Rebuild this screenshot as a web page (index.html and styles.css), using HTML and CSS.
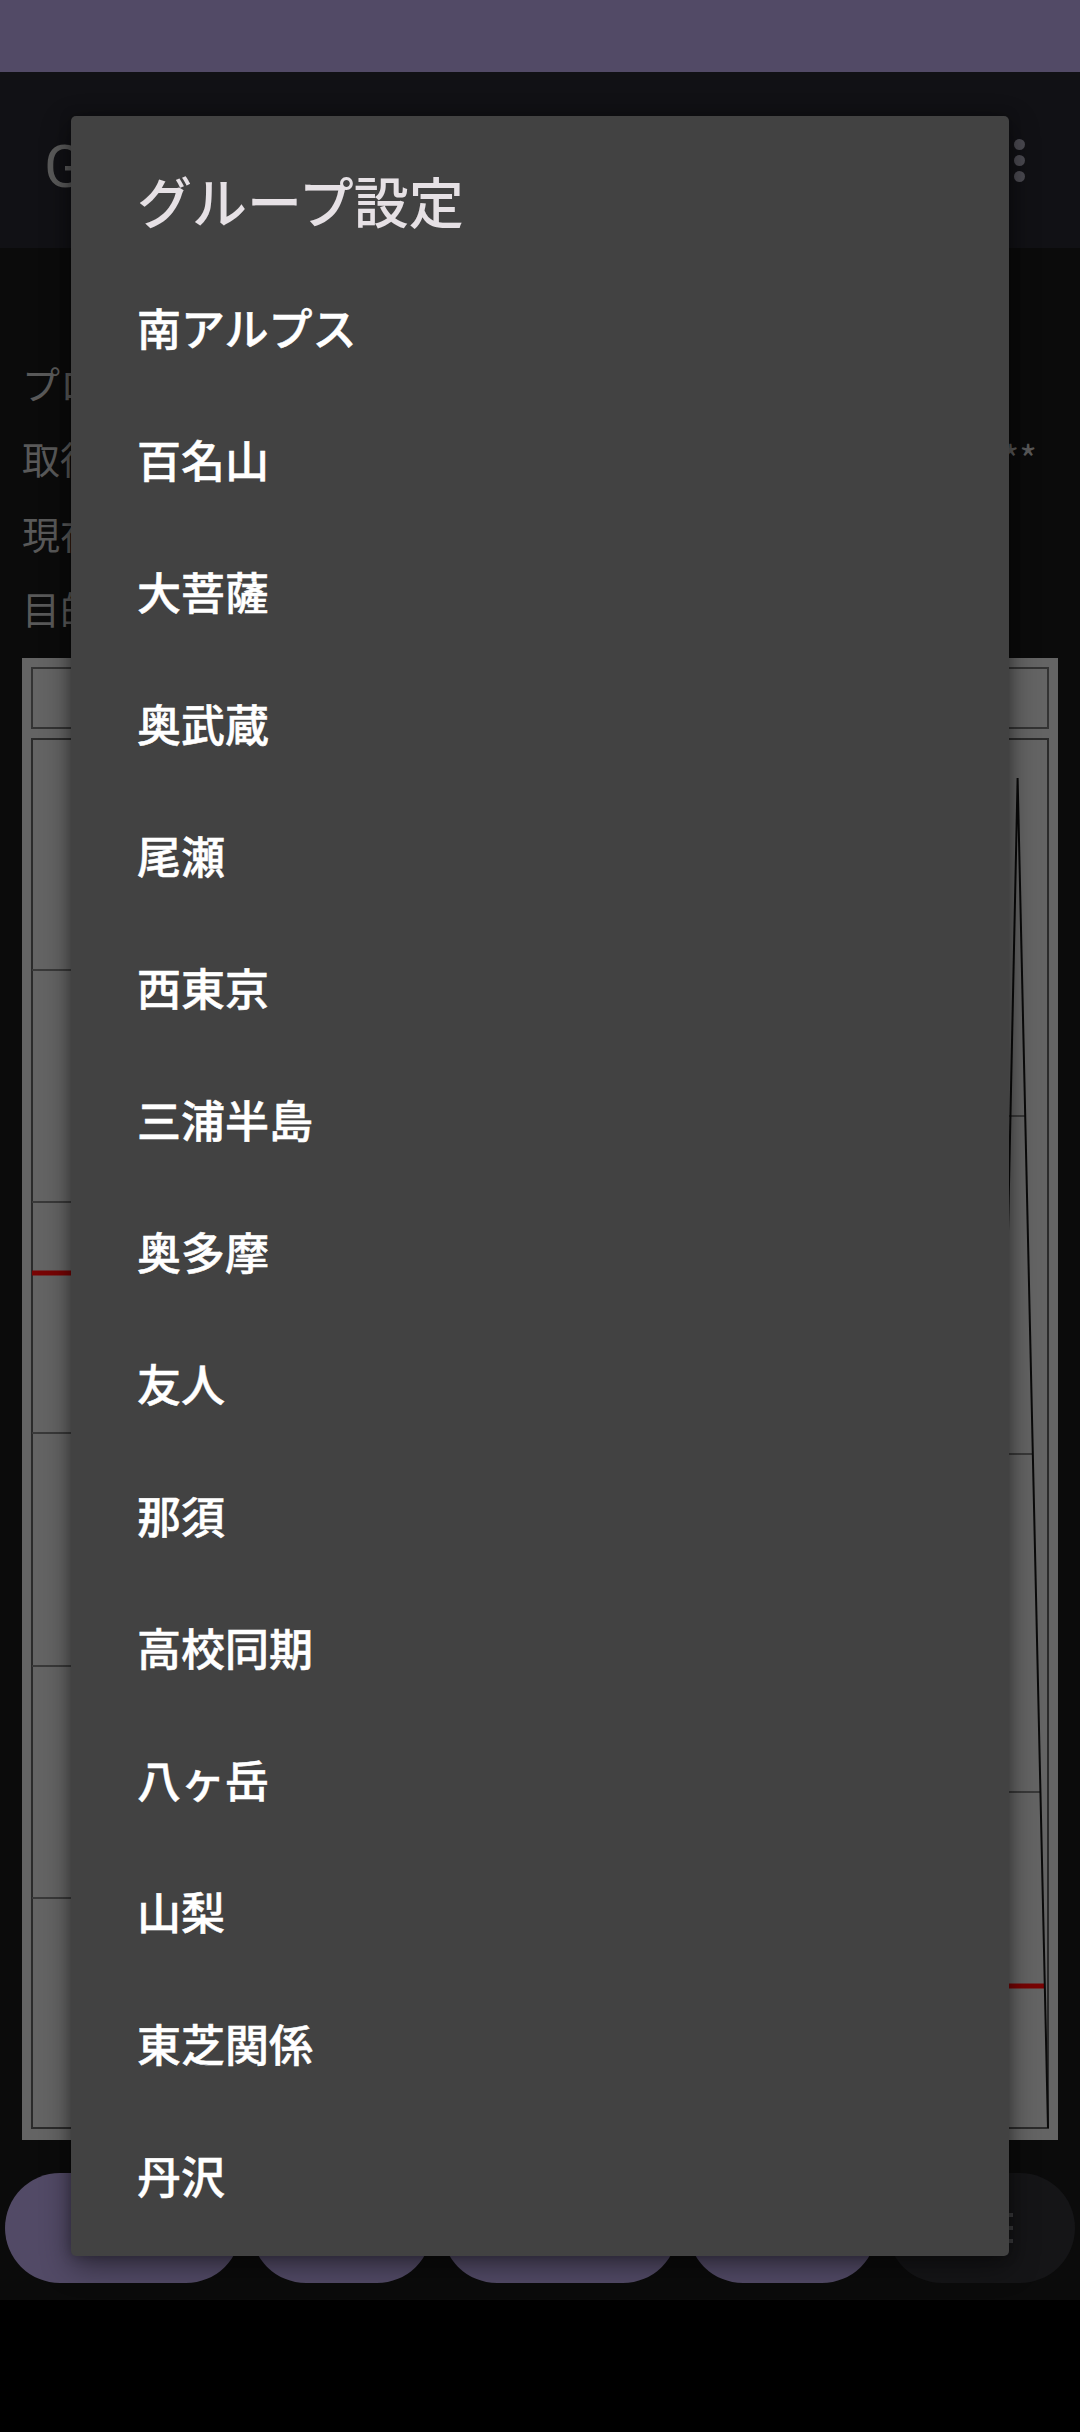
FILE: index.html
```html
<!DOCTYPE html>
<html lang="ja">

<head>
    <meta charset="UTF-8">
    <meta name="viewport" content="width=device-width, initial-scale=1.0">
    <title>GPS高度計</title>
    <link rel="stylesheet" href="styles.css">
</head>

<body>
    <div class="screen">
        <!-- Status Bar -->
        <div class="status-bar"></div>

        <!-- App Bar -->
        <header class="app-bar">
            <h1>GPS高度計</h1>
            <div class="overflow"><span></span><span></span><span></span></div>
        </header>

        <!-- Main Content -->
        <main class="content">
            <div class="info">
                <div class="info-row"><span>プロバイダ</span></div>
                <div class="info-row"><span>取得時刻</span><span class="value">****</span></div>
                <div class="info-row"><span>現在地</span></div>
                <div class="info-row"><span>目的地</span></div>
            </div>

            <div class="chart">
                <svg width="1036" height="1482" viewBox="0 0 1036 1482">
                    <rect x="10" y="10" width="1016" height="60" fill="none" stroke="#333" stroke-width="2" />
                    <rect x="10" y="81" width="1016" height="1389" fill="none" stroke="#2b2b2b" stroke-width="2" />
                    <g stroke="#393939" stroke-width="2">
                        <line x1="10" y1="312" x2="520" y2="312" />
                        <line x1="10" y1="544" x2="520" y2="544" />
                        <line x1="10" y1="775" x2="520" y2="775" />
                        <line x1="10" y1="1008" x2="520" y2="1008" />
                        <line x1="10" y1="1240" x2="520" y2="1240" />
                        <line x1="520" y1="458" x2="1003" y2="458" />
                        <line x1="520" y1="796" x2="1011" y2="796" />
                        <line x1="520" y1="1134" x2="1018" y2="1134" />
                    </g>
                    <g stroke="#780404" stroke-width="5">
                        <line x1="10" y1="615" x2="520" y2="615" />
                        <line x1="520" y1="1328" x2="1023" y2="1328" />
                    </g>
                    <polyline points="967,1470 995.6,120 1026,1470" fill="none" stroke="#0a0a0a" stroke-width="2" />
                    <text class="axis-label" x="86" y="890" transform="rotate(-90 86 890)">前後傾キ 21</text>
                </svg>
            </div>

            <div class="buttons">
                <button class="btn btn-wide">開始</button>
                <button class="btn btn-mid">停止</button>
                <button class="btn btn-wide">リセット</button>
                <button class="btn btn-small">保存</button>
                <button class="btn btn-dark">
                    <svg width="64" height="30" viewBox="0 0 64 30">
                        <g stroke="#3a3a3c" stroke-width="4">
                            <line x1="0" y1="2" x2="64" y2="2" />
                            <line x1="0" y1="15" x2="64" y2="15" />
                            <line x1="0" y1="28" x2="64" y2="28" />
                        </g>
                    </svg>
                </button>
            </div>
        </main>

        <!-- Navigation Bar -->
        <div class="nav-bar"></div>

        <!-- Group Dialog -->
        <div class="dialog">
            <h2>グループ設定</h2>
            <ul>
                <li>南アルプス</li>
                <li>百名山</li>
                <li>大菩薩</li>
                <li>奥武蔵</li>
                <li>尾瀬</li>
                <li>西東京</li>
                <li>三浦半島</li>
                <li>奥多摩</li>
                <li>友人</li>
                <li>那須</li>
                <li>高校同期</li>
                <li>八ヶ岳</li>
                <li>山梨</li>
                <li>東芝関係</li>
                <li>丹沢</li>
            </ul>
        </div>
    </div>
</body>

</html>
```

FILE: styles.css
```css
/* General Reset */
* {
    margin: 0;
    padding: 0;
    box-sizing: border-box;
}

body {
    width: 1080px;
    height: 2432px;
    overflow: hidden;
    background-color: #000;
    font-family: "Noto Sans CJK JP", sans-serif;
}

.screen {
    position: relative;
    width: 1080px;
    height: 2432px;
    display: flex;
    flex-direction: column;
}

/* Status Bar */
.status-bar {
    height: 72px;
    background-color: #524a66;
}

/* App Bar */
.app-bar {
    height: 176px;
    background-color: #111115;
    display: flex;
    align-items: center;
    justify-content: space-between;
    padding-left: 44px;
}

.app-bar h1 {
    font-family: Roboto, "Noto Sans CJK JP", sans-serif;
    font-size: 60px;
    font-weight: 400;
    color: #5a5a5a;
}

.overflow {
    display: flex;
    flex-direction: column;
    gap: 5px;
    margin-right: 55px;
}

.overflow span {
    width: 11px;
    height: 11px;
    border-radius: 50%;
    background-color: #4a4950;
}

/* Main Content */
.content {
    flex: 1;
    background-color: #0b0b0b;
    padding: 97px 22px 0;
    display: flex;
    flex-direction: column;
}

.info-row {
    display: flex;
    justify-content: space-between;
    font-size: 38px;
    line-height: 75px;
    color: #595959;
}

.info-row .value {
    margin-right: 21px;
}

/* Chart */
.chart {
    margin-top: 13px;
    height: 1482px;
    background-color: #646464;
}

.chart svg {
    display: block;
}

.axis-label {
    font-family: "Noto Sans CJK JP", sans-serif;
    font-size: 40px;
    fill: #111;
}

/* Bottom Buttons */
.buttons {
    display: flex;
    justify-content: space-between;
    margin: 33px -17px 0;
}

.btn {
    height: 110px;
    border: none;
    border-radius: 55px;
    background-color: #524a66;
    color: #1c1a24;
    font-family: "Noto Sans CJK JP", sans-serif;
    font-size: 40px;
    display: flex;
    align-items: center;
    justify-content: center;
}

.btn-wide {
    width: 236px;
}

.btn-mid {
    width: 181px;
}

.btn-small {
    width: 189px;
}

.btn-dark {
    width: 188px;
    background-color: #151517;
}

.btn-dark svg {
    display: block;
}

/* Navigation Bar */
.nav-bar {
    height: 132px;
    background-color: #000;
}

/* Dialog */
.dialog {
    position: absolute;
    left: 71px;
    top: 116px;
    width: 938px;
    padding: 56px 0 15px;
    background-color: #424242;
    border-radius: 5px;
    box-shadow: 0 10px 30px rgba(0, 0, 0, 0.45), 0 0 12px rgba(0, 0, 0, 0.25);
}

.dialog h2 {
    font-size: 55px;
    line-height: 55px;
    font-weight: 500;
    color: #e6e1e5;
    padding: 0 66px;
    margin-bottom: 34px;
}

.dialog ul {
    list-style: none;
}

.dialog li {
    height: 132px;
    padding: 0 66px;
    font-size: 44px;
    line-height: 132px;
    font-weight: 500;
    -webkit-text-stroke: 0.5px #fff;
    color: #fff;
}
```
